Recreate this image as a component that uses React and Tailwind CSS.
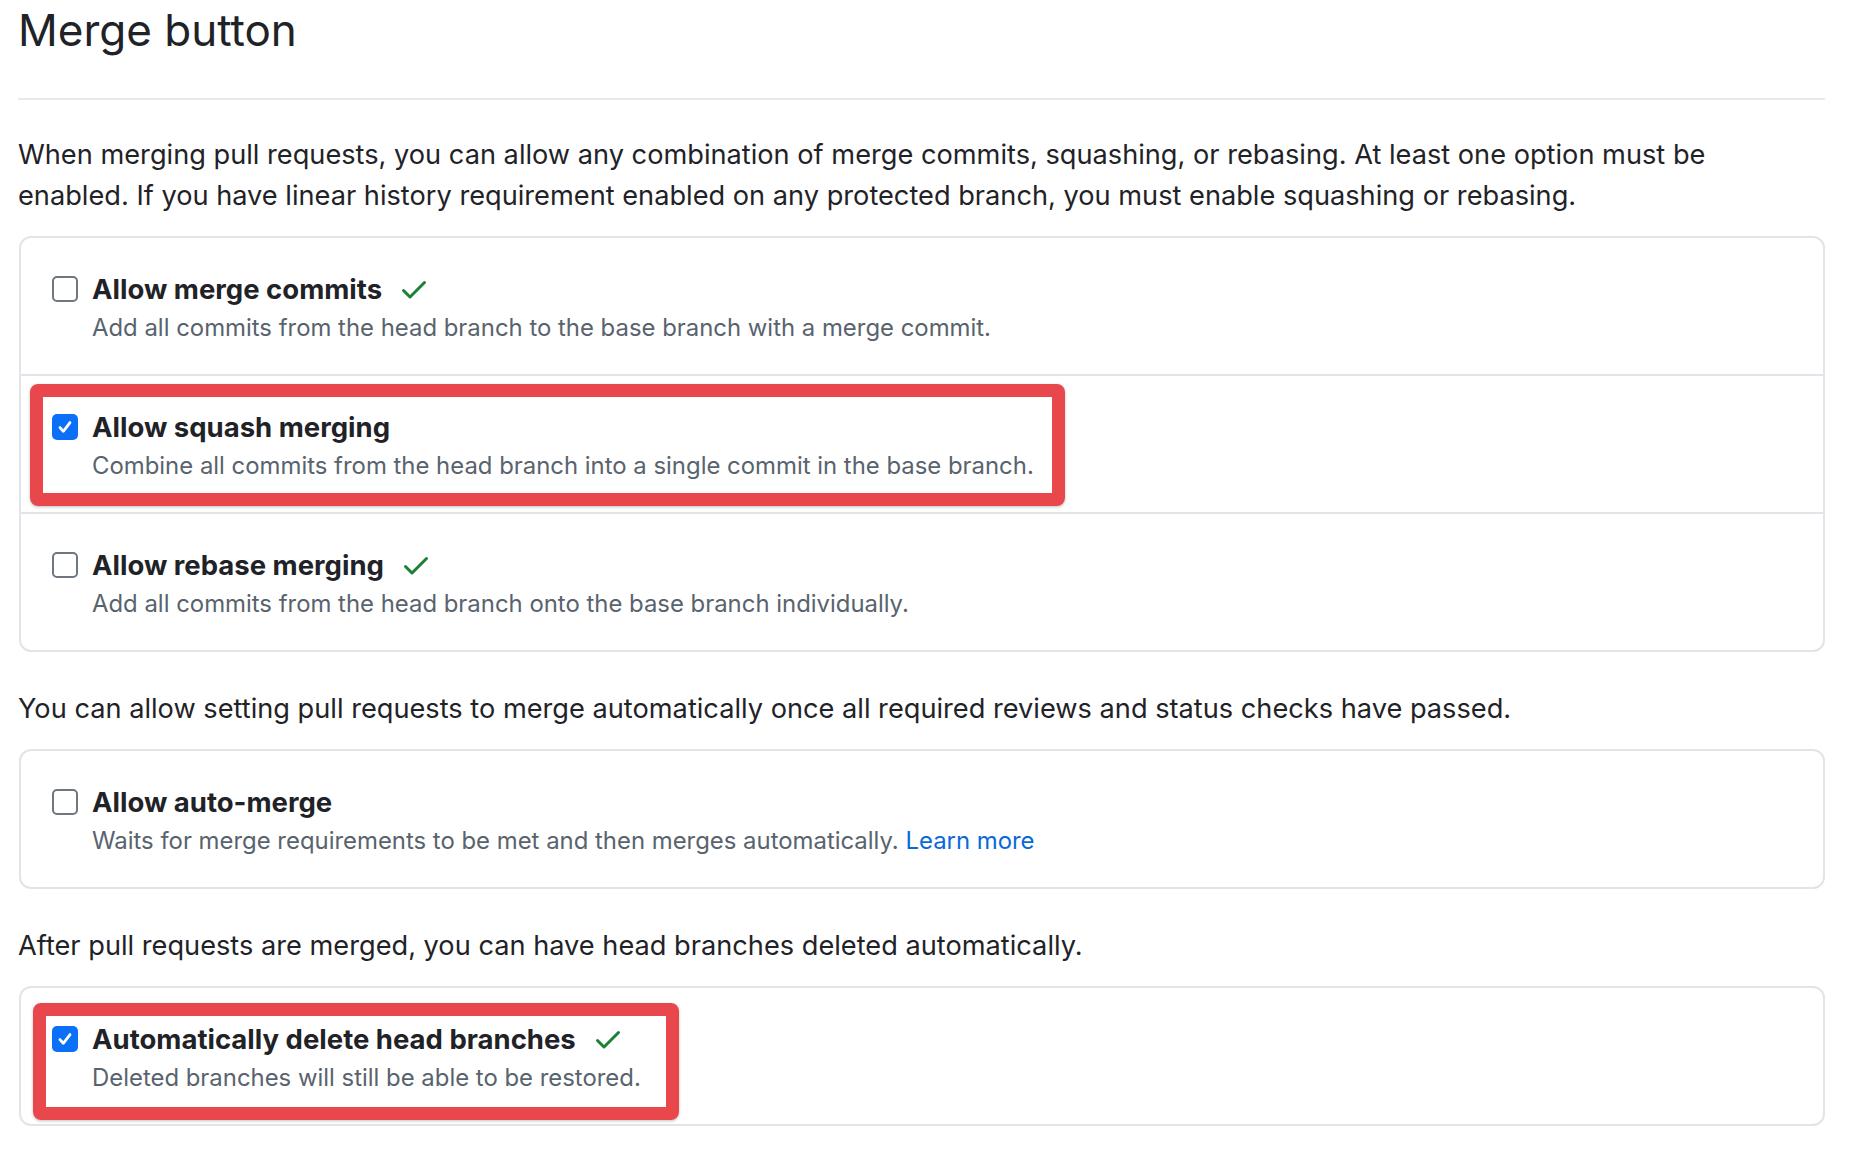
import React from "react";

const CheckMark = () => (
  <svg width="32" height="32" viewBox="0 0 16 16" fill="#1a7f37" className="ml-[16px] shrink-0">
    <path d="M13.78 4.22a.75.75 0 0 1 0 1.06l-7.25 7.25a.75.75 0 0 1-1.06 0L2.22 9.28a.751.751 0 0 1 .018-1.042.751.751 0 0 1 1.042-.018L6 10.94l6.72-6.72a.75.75 0 0 1 1.06 0Z" />
  </svg>
);

function Checkbox({ checked }) {
  if (checked) {
    return (
      <span className="mt-[6px] flex h-[26px] w-[26px] shrink-0 items-center justify-center rounded-[5px] bg-[#0b6ff7]">
        <svg width="18" height="18" viewBox="0 0 18 18">
          <path d="M4 9.6l3.3 3.7L14 4.6" stroke="white" strokeWidth="2.8" fill="none" strokeLinecap="round" strokeLinejoin="round" />
        </svg>
      </span>
    );
  }
  return <span className="mt-[6px] h-[26px] w-[26px] shrink-0 rounded-[5px] border-2 border-[#6e7781] bg-white" />;
}

function OptionRow({ checked, label, desc, verified, first, highlight }) {
  return (
    <div className={`relative flex gap-[14px] pl-[31px] pr-[32px] pt-[32px] pb-[28px] ${first ? "" : "border-t-2 border-[#e1e4e8]"}`}>
      <Checkbox checked={checked} />
      <div>
        <div className="flex items-center">
          <span className="text-[27.5px] font-bold leading-[38px] text-[#1f2328]">{label}</span>
          {verified && <CheckMark />}
        </div>
        <p className="mt-[2px] text-[23.9px] leading-[36px] text-[#59636e]">{desc}</p>
      </div>
      {highlight}
    </div>
  );
}

const Box = ({ children }) => (
  <div className="ml-[1px] mt-[20px] rounded-[12px] border-2 border-[#e1e4e8]">{children}</div>
);

export default function App() {
  return (
    <div className="min-h-screen bg-white pl-[18px] pr-[27px] pt-[2px] font-['Inter',sans-serif] text-[#1f2328]">
      <h2 className="text-[44px] font-normal leading-[56px]">Merge button</h2>
      <div className="mt-[40px] h-[2px] bg-[#e8eaed]" />

      <p className="mt-[34px] pr-[12px] text-[27.2px] leading-[41px]">
        When merging pull requests, you can allow any combination of merge commits, squashing, or rebasing. At least one option must be enabled. If you have linear history requirement enabled on any protected branch, you must enable squashing or rebasing.
      </p>

      <Box>
        <OptionRow
          first
          verified
          label="Allow merge commits"
          desc="Add all commits from the head branch to the base branch with a merge commit."
        />
        <OptionRow
          checked
          label="Allow squash merging"
          desc="Combine all commits from the head branch into a single commit in the base branch."
          highlight={
            <div className="pointer-events-none absolute left-[9px] top-[8px] h-[122px] w-[1035px] rounded-[8px] border-[13px] border-[#e8474c] shadow-[0_1px_3px_rgba(0,0,0,0.25)]" />
          }
        />
        <OptionRow
          verified
          label="Allow rebase merging"
          desc="Add all commits from the head branch onto the base branch individually."
        />
      </Box>

      <p className="mt-[36px] pr-[12px] text-[27.2px] leading-[41px]">
        You can allow setting pull requests to merge automatically once all required reviews and status checks have passed.
      </p>

      <Box>
        <OptionRow
          first
          label="Allow auto-merge"
          desc={
            <>
              Waits for merge requirements to be met and then merges automatically.{" "}
              <a href="#" className="text-[#0969da]">Learn more</a>
            </>
          }
        />
      </Box>

      <p className="mt-[36px] pr-[12px] text-[27.2px] leading-[41px]">
        After pull requests are merged, you can have head branches deleted automatically.
      </p>

      <Box>
        <OptionRow
          first
          checked
          verified
          label="Automatically delete head branches"
          desc="Deleted branches will still be able to be restored."
          highlight={
            <div className="pointer-events-none absolute left-[12px] top-[15px] h-[117px] w-[646px] rounded-[8px] border-[13px] border-[#e8474c] shadow-[0_1px_3px_rgba(0,0,0,0.25)]" />
          }
        />
      </Box>
    </div>
  );
}
